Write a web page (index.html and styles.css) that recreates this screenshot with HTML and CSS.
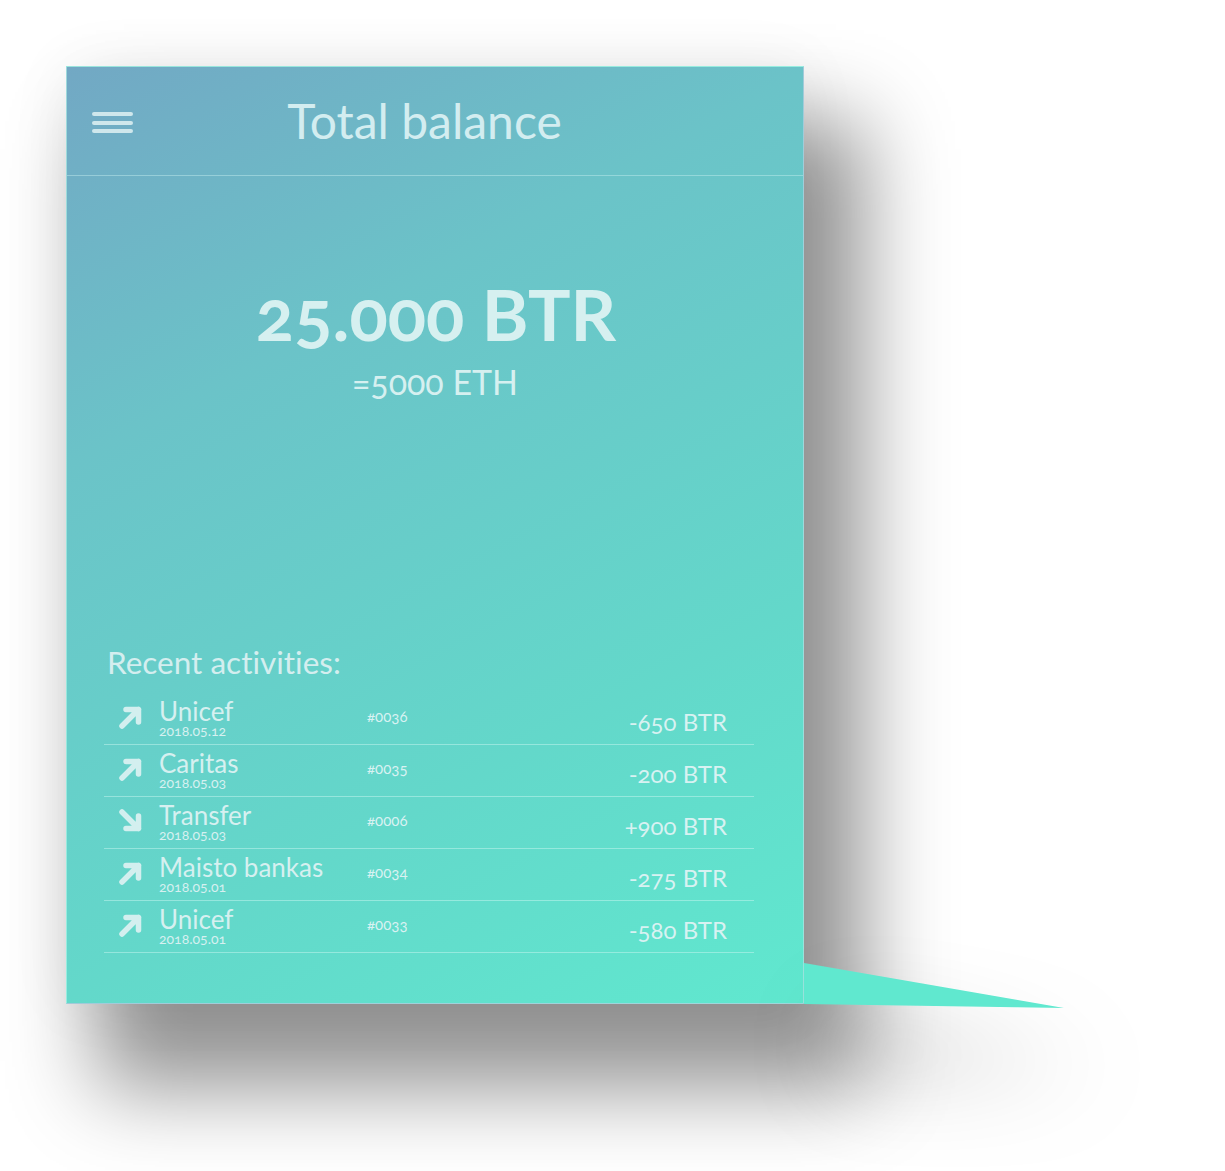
FILE: index.html
```html
<!DOCTYPE html>
<html lang="en">
<head>
<meta charset="utf-8">
<title>Total balance</title>
<link rel="stylesheet" href="styles.css">
</head>
<body>
<div class="stage">
  <section class="card">
    <header class="card-header">
      <div class="menu" aria-label="Menu"><span></span><span></span><span></span></div>
      <h1 class="title">Total balance</h1>
    </header>
    <div class="balance">
      <div class="balance-main">25.000 BTR</div>
      <div class="balance-sub">=5000 ETH</div>
    </div>
    <h2 class="recent-title">Recent activities:</h2>
    <ul class="activities">
      <li class="activity">
        <svg class="arrow" viewBox="0 0 26 26"><path d="M4 22 L20.5 5.5 M8 5.5 H20.5 V18"/></svg>
        <div class="who"><div class="name">Unicef</div><div class="date">2018.05.12</div></div>
        <div class="ref">#0036</div>
        <div class="amount">-650 BTR</div>
      </li>
      <li class="activity">
        <svg class="arrow" viewBox="0 0 26 26"><path d="M4 22 L20.5 5.5 M8 5.5 H20.5 V18"/></svg>
        <div class="who"><div class="name">Caritas</div><div class="date">2018.05.03</div></div>
        <div class="ref">#0035</div>
        <div class="amount">-200 BTR</div>
      </li>
      <li class="activity">
        <svg class="arrow" viewBox="0 0 26 26"><path d="M4 4 L20.5 20.5 M20.5 8 V20.5 H8"/></svg>
        <div class="who"><div class="name">Transfer</div><div class="date">2018.05.03</div></div>
        <div class="ref">#0006</div>
        <div class="amount">+900 BTR</div>
      </li>
      <li class="activity">
        <svg class="arrow" viewBox="0 0 26 26"><path d="M4 22 L20.5 5.5 M8 5.5 H20.5 V18"/></svg>
        <div class="who"><div class="name">Maisto bankas</div><div class="date">2018.05.01</div></div>
        <div class="ref">#0034</div>
        <div class="amount">-275 BTR</div>
      </li>
      <li class="activity">
        <svg class="arrow" viewBox="0 0 26 26"><path d="M4 22 L20.5 5.5 M8 5.5 H20.5 V18"/></svg>
        <div class="who"><div class="name">Unicef</div><div class="date">2018.05.01</div></div>
        <div class="ref">#0033</div>
        <div class="amount">-580 BTR</div>
      </li>
    </ul>
    <div class="tail"><div class="tail-shape"></div></div>
  </section>
</div>
</body>
</html>
```

FILE: styles.css
```css
* { box-sizing: border-box; }

html, body {
  margin: 0;
  padding: 0;
  background: #ffffff;
}

body {
  font-family: "Lato", "Open Sans", sans-serif;
  font-variant-numeric: oldstyle-nums;
  font-variant-ligatures: none;
  color: #d6f0f1;
}

.stage {
  min-height: 1171px;
  padding: 66px 0 0 66px;
}

.card {
  position: relative;
  width: 738px;
  height: 938px;
  border: 1px solid rgba(220, 245, 245, 0.45);
  background: linear-gradient(152deg, #72a8c4 0%, #6bc3c8 30%, #63d8ca 70%, #60e8cf 100%);
  box-shadow: 45px 70px 80px 15px rgba(0, 0, 0, 0.42), 0 0 60px rgba(0, 0, 0, 0.06);
}

.card-header {
  height: 109px;
  display: grid;
  grid-template-columns: 1fr auto 1fr;
  align-items: center;
  padding: 0 46px 0 25px;
  border-bottom: 1px solid rgba(200, 240, 240, 0.45);
}

.menu {
  display: flex;
  flex-direction: column;
  gap: 4.5px;
  width: 41px;
  margin-top: 3px;
}

.menu span {
  display: block;
  height: 4px;
  border-radius: 2px;
  background: #cfe7ec;
}

.title {
  margin: 0;
  font-size: 48px;
  line-height: 48px;
  font-weight: 400;
  color: #d3edf0;
}

.balance {
  text-align: center;
  padding-top: 102px;
  height: 471px;
}

.balance-main {
  font-size: 71px;
  line-height: 71px;
  font-weight: 700;
  color: #d6f0f0;
  padding-left: 2px;
}

.balance-sub {
  margin-top: 16px;
  font-size: 34px;
  line-height: 34px;
  font-weight: 400;
  color: #d6f0f0;
}

.recent-title {
  margin: 0;
  padding-left: 40px;
  font-size: 31.5px;
  line-height: 30px;
  font-weight: 400;
  color: #d4eeef;
}

.activities {
  list-style: none;
  margin: 16px 0 0 37px;
  padding: 0;
  width: 650px;
}

.activity {
  display: grid;
  grid-template-columns: 25px 208px 1fr auto;
  column-gap: 16px;
  align-items: start;
  height: 52px;
  padding: 5px 27px 0 14px;
  border-bottom: 1px solid rgba(200, 245, 240, 0.5);
}

.arrow {
  width: 26px;
  height: 26px;
  margin-top: 6px;
  fill: none;
  stroke: #d3efef;
  stroke-width: 5.5;
  stroke-linecap: round;
  stroke-linejoin: round;
}

.who {
  display: flex;
  flex-direction: column;
}

.name {
  font-size: 26px;
  line-height: 26px;
  color: #d6f0f0;
}

.date {
  font-size: 14px;
  line-height: 14px;
  color: #d6f0f0;
}

.ref {
  margin-top: 11px;
  margin-left: -16px;
  font-size: 15px;
  line-height: 14px;
  color: #d8f2f2;
}

.amount {
  margin-top: 12px;
  font-size: 24px;
  line-height: 24px;
  text-align: right;
  color: #d8f2f2;
}

.tail {
  position: absolute;
  left: calc(100% + 1px);
  top: 896px;
  width: 260px;
  height: 45px;
  filter: drop-shadow(37px 62px 45px rgba(0, 0, 0, 0.28));
}

.tail-shape {
  width: 100%;
  height: 100%;
  background: #60e8cf;
  clip-path: polygon(0 0, 100% 100%, 0 91%);
}
```
